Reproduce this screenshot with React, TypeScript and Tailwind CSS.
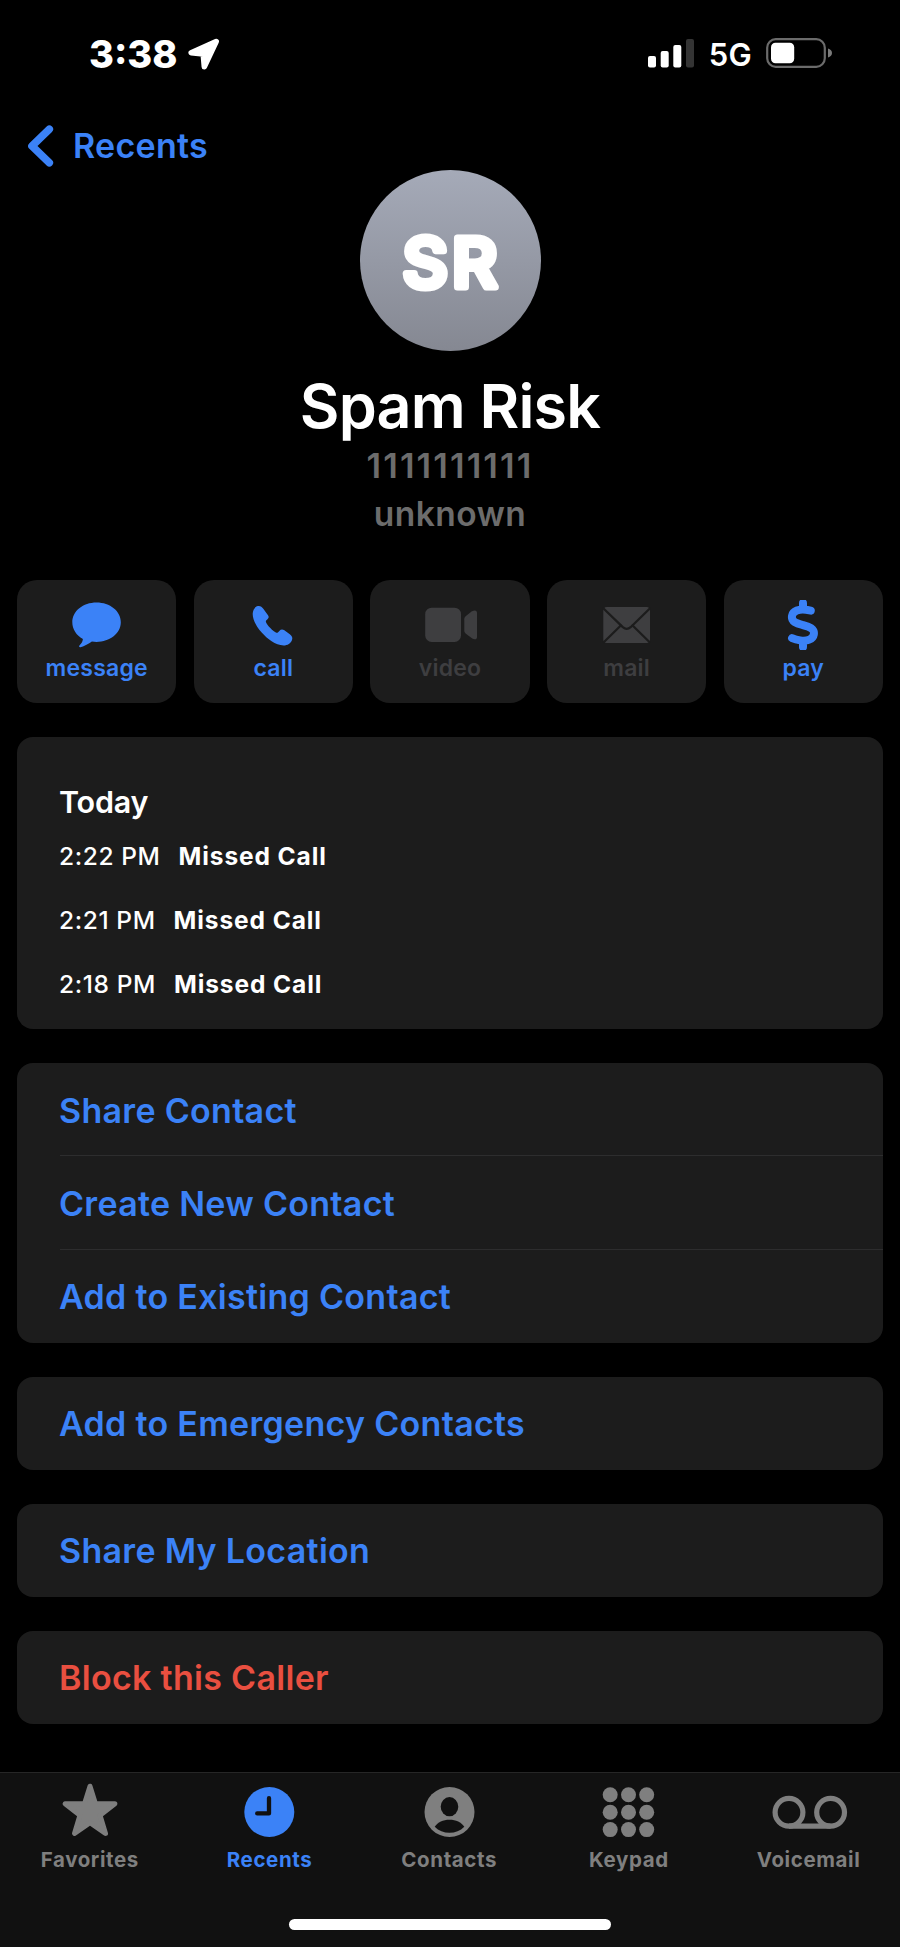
import React from "react";
import { FaDollarSign } from "react-icons/fa6";

const BLUE = "#3b82f7";
const DIM = "#3e3e40";
const GRAY = "#7f7f7f";
const CARD = "#1c1c1c";
const BAR = "#111111";

function MessageIcon() {
  return (
    <svg width="60" height="60" viewBox="0 0 60 60" fill={BLUE}>
      <path d="M29.500 7.600C43 7.600 53.800 16.200 53.800 27.300S43 46.900 29.500 46.900C27.900 46.900 26.400 46.800 24.900 46.600C21.600 48.800 17.500 51.400 13.600 52.300C12.100 52.600 11.700 51.400 12.600 50.300C14 48.700 15.700 46.700 15.900 43.900C9.300 40.400 5.300 34.200 5.300 27.300C5.300 16.200 16 7.600 29.500 7.600Z" />
    </svg>
  );
}

function PhoneIcon() {
  return (
    <svg width="60" height="60" viewBox="0 0 60 60" fill={BLUE}>
      <path d="M15 11.100C17.200 10.700 19 12 20.300 13.800L25 20.300C26.100 21.900 25.800 22.900 24.700 24C23.400 25.200 22.500 25.600 23 27.300C23.600 29.700 30.600 36.900 33.300 37.700C34.600 38.100 35.100 37.300 36.300 36C37.700 34.400 39.300 34.100 41 35.100L46.800 39.200C49 40.800 49.800 42.700 49 45C47.800 48.300 44.500 50.500 40.600 50.500C32.500 50.300 24.200 43.900 18.700 37.600C13.500 31.700 9.600 24.800 9.700 18.800C9.800 14.600 12 11.700 15 11.100Z" />
    </svg>
  );
}

function VideoIcon() {
  return (
    <svg width="60" height="60" viewBox="0 0 60 60" fill={DIM}>
      <rect x="5.200" y="12.700" width="35.800" height="34.300" rx="6.500" />
      <path d="M44.300 24.300c0-1.500.5-2.500 1.600-3.400l6-4.600c1-.7 1.900-.9 2.900-.9 1.400 0 2.200.9 2.200 2.400v24.200c0 1.500-.8 2.300-2.200 2.300-1 0-1.900-.3-2.900-1l-6-4.600c-1.100-.9-1.600-1.900-1.600-3.300Z" />
    </svg>
  );
}

function MailIcon() {
  return (
    <svg width="60" height="60" viewBox="0 0 60 60" fill="none">
      <rect x="6.300" y="12" width="46.700" height="36" rx="3.500" fill={DIM} />
      <g stroke={CARD} strokeWidth="2.300" strokeLinecap="round" strokeLinejoin="round">
        <path d="M6.500 13.500 25.800 32.200Q29.700 35.600 33.600 32.200L52.800 13.500" />
        <path d="M7 47 23.800 30.500M52.400 47 35.600 30.500" />
      </g>
    </svg>
  );
}

function PayIcon() {
  return (
    <div className="flex h-[60px] w-[60px] items-center justify-center">
      <FaDollarSign size={50} color={BLUE} stroke={BLUE} strokeWidth={18} />
    </div>
  );
}

function StarIcon() {
  return (
    <svg width="80" height="60" viewBox="0 0 80 60">
      <path
        d="M40 6.200 45.400 23.600 64.900 23.700 50.100 35.400 55.500 53.400 40 42.700 24.500 53.400 29.900 35.400 15.100 23.700 34.600 23.600Z"
        fill={GRAY}
        stroke={GRAY}
        strokeWidth="5"
        strokeLinejoin="round"
      />
    </svg>
  );
}

function ClockIcon() {
  return (
    <svg width="80" height="60" viewBox="0 0 80 60">
      <circle cx="39.300" cy="32" r="25" fill={BLUE} />
      <path
        d="M39 18.200V33.400H27.200"
        fill="none"
        stroke={BAR}
        strokeWidth="4.300"
        strokeLinecap="round"
        strokeLinejoin="round"
      />
    </svg>
  );
}

function ContactIcon() {
  return (
    <svg width="80" height="60" viewBox="0 0 80 60">
      <circle cx="40.500" cy="32" r="25" fill={GRAY} />
      <ellipse cx="40.500" cy="26.700" rx="8.800" ry="9.600" fill={BAR} />
      <path d="M25.700 46.800C28.800 42.300 34 39.800 40.500 39.800S52.200 42.300 55.300 46.800C51.300 50.800 46.200 52.800 40.500 52.800S29.700 50.800 25.700 46.800Z" fill={BAR} />
    </svg>
  );
}

function KeypadIcon() {
  return (
    <svg width="80" height="60" viewBox="0 0 80 60" fill={GRAY}>
      {[14.7, 32.2, 49.6].map((cy) =>
        [21.2, 39.5, 57.7].map((cx) => <circle key={`${cx}-${cy}`} cx={cx} cy={cy} r="7.500" />)
      )}
    </svg>
  );
}

function VoicemailIcon() {
  return (
    <svg width="80" height="60" viewBox="0 0 80 60" fill="none" stroke={GRAY} strokeWidth="5.200">
      <circle cx="20" cy="32.300" r="13.900" />
      <circle cx="61.600" cy="32.300" r="13.900" />
      <path d="M20 46.200H61.600" />
    </svg>
  );
}

const actions = [
  { label: "message", icon: MessageIcon, enabled: true },
  { label: "call", icon: PhoneIcon, enabled: true },
  { label: "video", icon: VideoIcon, enabled: false },
  { label: "mail", icon: MailIcon, enabled: false },
  { label: "pay", icon: PayIcon, enabled: true },
];

const calls = ["2:22 PM", "2:21 PM", "2:18 PM"];

const tabs = [
  { label: "Favorites", icon: StarIcon },
  { label: "Recents", icon: ClockIcon, active: true },
  { label: "Contacts", icon: ContactIcon },
  { label: "Keypad", icon: KeypadIcon },
  { label: "Voicemail", icon: VoicemailIcon },
];

function StatusBar() {
  return (
    <div className="flex h-[108px] items-center pl-[89px] pr-[67px] text-white">
      <span className="text-[38px] font-extrabold">3:38</span>
      <svg className="ml-[9px]" width="34" height="34" viewBox="0 0 34 34">
        <path
          d="M29.200 4.500 4.200 15.800 16.200 17 17.300 29.800Z"
          fill="white"
          stroke="white"
          strokeWidth="5.500"
          strokeLinejoin="round"
        />
      </svg>
      <div className="ml-auto flex items-center">
        <svg width="46" height="30" viewBox="0 0 46 30" fill="white">
          <rect x="0" y="17" width="8" height="11.500" rx="2" />
          <rect x="12.700" y="12" width="8" height="16.500" rx="2" />
          <rect x="25.300" y="6" width="8" height="22.500" rx="2" />
          <rect x="38" y="0" width="8" height="28.500" rx="2" fill="#343434" />
        </svg>
        <span className="ml-[15px] mt-[2px] text-[31px] font-semibold tracking-[0.3px]">5G</span>
        <svg className="ml-[14px]" width="67" height="32" viewBox="0 0 67 32">
          <rect x="1.200" y="1.200" width="57.600" height="27.600" rx="8.500" fill="none" stroke="#6b6b6b" strokeWidth="2.200" />
          <rect x="5" y="4.800" width="23.200" height="20.400" rx="4.500" fill="white" />
          <path d="M62 10.500c2.500.7 4 2.300 4 4.500s-1.500 3.800-4 4.500Z" fill="#7a7a7a" />
        </svg>
      </div>
    </div>
  );
}

function ActionCard({ items, danger }: { items: string[]; danger?: boolean }) {
  return (
    <div className="mt-[34px] overflow-hidden rounded-[16px] bg-[#1c1c1c] pl-[43px]">
      {items.map((item, i) => (
        <button
          key={item}
          className={`flex h-[93.2px] w-full items-center text-left text-[34px] font-[570] tracking-[0.3px] ${
            danger ? "text-[#e94f40]" : "text-[#3b82f7]"
          } ${i < items.length - 1 ? "border-b border-[#2d2d2e] pt-[2px]" : ""}`}
        >
          <span className="-ml-px">{item}</span>
        </button>
      ))}
    </div>
  );
}

export default function App() {
  return (
    <div className="flex h-[1947px] w-[900px] flex-col overflow-hidden bg-black font-['Inter',sans-serif]">
      <StatusBar />

      <div className="flex h-[75px] items-center pl-[28px] text-[#3b82f7]">
        <svg width="26" height="42" viewBox="0 0 26 42" fill="none">
          <path d="M21.300 4.200 4 21 21.300 37.800" stroke={BLUE} strokeWidth="7.600" strokeLinecap="round" strokeLinejoin="round" />
        </svg>
        <span className="mb-[1px] ml-[19px] text-[34px] font-[570] tracking-[0.3px]">Recents</span>
      </div>

      <div className="-mt-[13px] flex flex-col items-center">
        <svg width="181" height="181" viewBox="0 0 181 181">
          <defs>
            <linearGradient id="avatar" x1="0" y1="0" x2="0" y2="1">
              <stop offset="0" stopColor="#a5aab8" />
              <stop offset="1" stopColor="#858892" />
            </linearGradient>
          </defs>
          <circle cx="90.500" cy="90.500" r="90.500" fill="url(#avatar)" />
          <text
            transform="translate(92 117.200) scale(1.040 1)"
            textAnchor="middle"
            fontSize="67"
            fontWeight="500"
            letterSpacing="4"
            fill="white"
            stroke="white"
            strokeWidth="7"
            strokeLinejoin="round"
          >
            SR
          </text>
        </svg>
        <h1 className="mt-[20px] text-[61px] font-[580] leading-[70px] tracking-[-0.8px] text-white">Spam Risk</h1>
        <p className="text-[34.5px] font-semibold leading-[49px] tracking-[2.1px] text-[#6c6c6c]">1111111111</p>
        <p className="text-[33.5px] font-semibold leading-[49px] tracking-[0.5px] text-[#6c6c6c]">unknown</p>
      </div>

      <div className="mt-[41px] flex flex-col px-[17px]">
        <div className="grid grid-cols-5 gap-[17.3px]">
          {actions.map(({ label, icon: Icon, enabled }) => (
            <button
              key={label}
              className="flex h-[122.7px] flex-col items-center rounded-[20px] bg-[#1c1c1c] pt-[15px]"
            >
              <Icon />
              <span
                className={`text-[23px] font-semibold leading-[26px] tracking-[0.2px] ${
                  enabled ? "text-[#3b82f7]" : "text-[#3e3e40]"
                }`}
              >
                {label}
              </span>
            </button>
          ))}
        </div>

        <div className="mt-[34px] h-[292.6px] rounded-[16px] bg-[#1c1c1c] pl-[42px] pt-[42px] text-white">
          <h2 className="text-[30.5px] font-semibold leading-[46px] tracking-[-0.2px]">Today</h2>
          {calls.map((time) => (
            <div key={time} className="flex h-[63.7px] items-center text-[24.5px]">
              <span className="font-medium tracking-[0.6px]">{time}</span>
              <span className="ml-[18px] font-[750] tracking-[0.9px]">Missed Call</span>
            </div>
          ))}
        </div>

        <ActionCard items={["Share Contact", "Create New Contact", "Add to Existing Contact"]} />
        <ActionCard items={["Add to Emergency Contacts"]} />
        <ActionCard items={["Share My Location"]} />
        <ActionCard items={["Block this Caller"]} danger />
      </div>

      <nav className="mt-auto h-[175px] shrink-0 border-t border-[#262626] bg-[#111111] pt-[7px]">
        <div className="flex">
          {tabs.map(({ label, icon: Icon, active }) => (
            <div key={label} className="flex w-[179.7px] flex-col items-center">
              <Icon />
              <span
                className={`text-[20.5px] font-[650] leading-[40px] tracking-[0.6px] ${
                  active ? "text-[#3b82f7]" : "text-[#7f7f7f]"
                }`}
              >
                {label}
              </span>
            </div>
          ))}
        </div>
        <div className="mx-auto mt-[39px] h-[11px] w-[322px] rounded-full bg-white" />
      </nav>
    </div>
  );
}
